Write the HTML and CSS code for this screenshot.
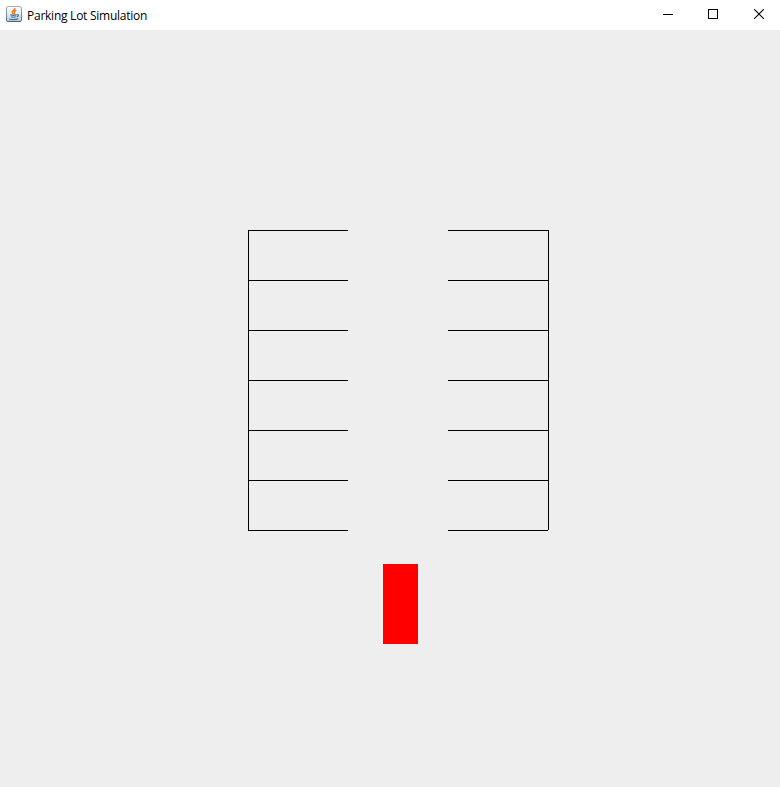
FILE: index.html
```html
<!DOCTYPE html>
<html lang="en">
<head>
<meta charset="utf-8">
<title>Parking Lot Simulation</title>
<link rel="stylesheet" href="styles.css">
</head>
<body>
<header class="titlebar">
  <svg class="app-icon" width="16" height="16" viewBox="0 0 16 16">
    <defs>
      <linearGradient id="tile" x1="0" y1="0" x2="0" y2="1">
        <stop offset="0" stop-color="#fbfcfd"/>
        <stop offset=".5" stop-color="#e6edf3"/>
        <stop offset="1" stop-color="#b4c8d8"/>
      </linearGradient>
      <linearGradient id="edge" x1="0" y1="0" x2="0" y2="1">
        <stop offset="0" stop-color="#a3b0bb"/>
        <stop offset="1" stop-color="#50687d"/>
      </linearGradient>
    </defs>
    <rect x=".5" y=".5" width="15" height="15" rx="1.5" fill="url(#tile)" stroke="url(#edge)"/>
    <path d="M8.8 2C9.4 4 5.8 4.6 6.2 6.4C6.4 7.2 7.3 7.6 7.3 8.6M10.3 4.2C8.6 4.9 7.8 5.5 8.3 6.5C8.7 7.2 8.9 7.6 8.1 8.5" fill="none" stroke="#f27a1a" stroke-width="1.5"/>
    <path d="M4.3 8.9Q7.5 9.8 10.5 8.9M5 10.8Q7.5 11.6 9.8 10.8M3.2 12.9Q7.5 14.3 12 12.9M10.8 8.8C13.4 8.3 12.6 10.4 10.8 10.9" fill="none" stroke="#42729f" stroke-width="1.1"/>
  </svg>
  <h1 class="title">Parking Lot Simulation</h1>
  <div class="controls">
    <button class="control" aria-label="Minimize"><svg width="10" height="10" shape-rendering="crispEdges"><path d="M0 5h10v1H0z"/></svg></button>
    <button class="control" aria-label="Maximize"><svg width="10" height="10" shape-rendering="crispEdges"><path d="M.5 .5h9v9h-9z" fill="none" stroke="#000"/></svg></button>
    <button class="control" aria-label="Close"><svg width="10" height="10"><path d="M.2 .2l9.6 9.6M9.8 .2L.2 9.8" fill="none" stroke="#000" stroke-width="1.1"/></svg></button>
  </div>
</header>
<main class="scene">
  <div class="lot">
    <div class="side left">
      <div class="bay"></div><div class="bay"></div><div class="bay"></div>
      <div class="bay"></div><div class="bay"></div><div class="bay"></div>
      <div class="end"></div>
    </div>
    <div class="side right">
      <div class="bay"></div><div class="bay"></div><div class="bay"></div>
      <div class="bay"></div><div class="bay"></div><div class="bay"></div>
      <div class="end"></div>
    </div>
  </div>
  <div class="car"></div>
</main>
</body>
</html>
```
FILE: styles.css
```css
* { box-sizing: border-box; }
body {
  margin: 0;
  height: 787px;
  display: flex;
  flex-direction: column;
  background: #eee;
  overflow: hidden;
}
.titlebar {
  height: 30px;
  flex: none;
  display: flex;
  align-items: center;
  padding-left: 6px;
  background: #fff;
}
.app-icon { display: block; margin-top: -2px; }
.title {
  margin: 1px 0 0 5px;
  font: 12px/18px "Open Sans", sans-serif;
  letter-spacing: -0.25px;
  color: #000;
  white-space: nowrap;
}
.controls { display: flex; margin-left: auto; }
.control {
  width: 45px;
  height: 30px;
  padding: 0 0 2px 1px;
  border: 0;
  background: none;
  display: flex;
  align-items: center;
  justify-content: center;
}
.control:last-child { padding-left: 3px; }
.control svg { display: block; }
.scene { flex: 1; padding: 200px 0 0 248px; }
.lot { display: flex; gap: 100px; }
.side { width: 100px; }
.side.right { width: 101px; }
.bay { height: 50px; border-top: 1px solid #000; }
.left .bay { border-left: 1px solid #000; }
.right .bay { border-right: 1px solid #000; }
.end { width: 100px; height: 1px; background: #000; }
.car {
  width: 35px;
  height: 80px;
  margin: 33px 0 0 135px;
  background: #f00;
}
```
